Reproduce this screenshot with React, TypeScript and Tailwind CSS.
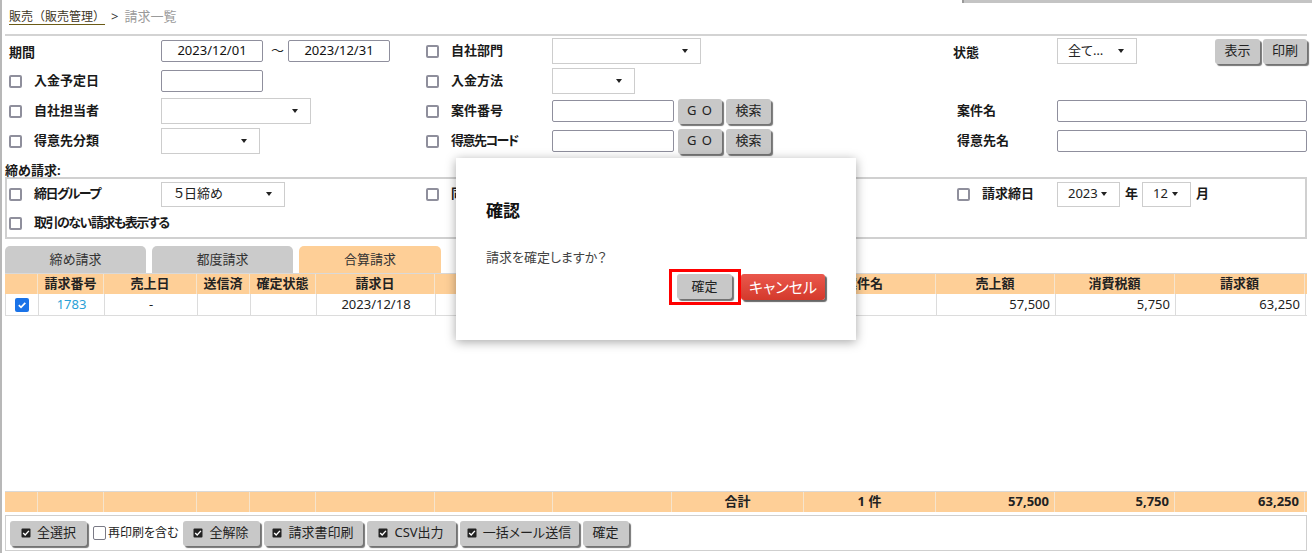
import React from "react"

// 請求一覧（合算請求）＋ 確認ダイアログ

function Check() {
  return <span className="inline-block w-[13px] h-[13px] shrink-0 rounded-[2px] border-2 border-[#8f8f9c] bg-white" />
}

function Arrow() {
  return (
    <span className="inline-block w-0 h-0 border-x-[3.5px] border-x-transparent border-t-[4px] border-t-[#222]" />
  )
}

function Select({ value = "", className = "" }: { value?: string; className?: string }) {
  return (
    <div
      className={`flex items-center justify-between bg-white border border-[#cdcdcd] pl-[10px] pr-[12px] text-[13px] text-[#222] ${className}`}
    >
      <span>{value}</span>
      <Arrow />
    </div>
  )
}

function Input({ value = "", className = "" }: { value?: string; className?: string }) {
  return (
    <div
      className={`flex items-center justify-center bg-white border border-[#8f8f9d] rounded-[2px] text-[13px] text-[#111] ${className}`}
    >
      {value}
    </div>
  )
}

function GrayBtn({ children, className = "" }: { children: React.ReactNode; className?: string }) {
  return (
    <div
      className={`flex items-center justify-center gap-[6px] bg-[#c8c8c8] rounded-[3px] shadow-[2px_2px_1px_rgba(0,0,0,0.55)] text-[13px] text-[#222] shrink-0 ${className}`}
    >
      {children}
    </div>
  )
}

function BoxIcon() {
  return (
    <svg width="10" height="10" viewBox="0 0 10 10">
      <rect x="0.5" y="0.5" width="9" height="9" rx="1" fill="#222" />
      <path d="M2.2 5 L4.2 7 L7.9 2.9" stroke="#fff" strokeWidth="1.4" fill="none" />
    </svg>
  )
}

function Label({ children, className = "" }: { children: React.ReactNode; className?: string }) {
  return <span className={`text-[13px] font-bold text-[#1a1a1a] whitespace-nowrap ${className}`}>{children}</span>
}

function CheckLabel({
  children,
  className = "",
  tight = false,
}: {
  children: React.ReactNode
  className?: string
  tight?: boolean
}) {
  return (
    <div className={`flex items-center gap-[12px] ${className}`}>
      <Check />
      <Label className={tight ? "tracking-[-1.5px]" : ""}>{children}</Label>
    </div>
  )
}

const cols =
  "grid grid-cols-[33px_66px_93px_53px_66px_119px_118px_119px_132px_132px_119px_120px_130px]"

export default function App() {
  return (
    <div className="relative w-[1312px] h-[553px] overflow-hidden bg-white border-l-2 border-[#b8b8b8] pl-[3px] pr-[5px] text-[#222] [font-family:'Noto_Sans','Noto_Sans_CJK_JP',sans-serif] [font-feature-settings:'palt']">
      {/* パンくず */}
      <div className="flex h-[34px] items-center">
        <div className="pl-[4px] text-[13px] flex items-center gap-[6px]">
          <span className="text-[#3d3524] underline decoration-[#6b5b16] underline-offset-[3px] [font-feature-settings:normal] text-[12px]">
            販売（販売管理）
          </span>
          <span className="text-[#333]">&gt;</span>
          <span className="text-[#9a9a9a]">請求一覧</span>
        </div>
        <div className="ml-auto -mr-[5px] self-start w-[350px] h-[3px] bg-[#c4c4c4] border-l-2 border-[#9a9a9a]" />
      </div>
      <div className="h-[2px] bg-[#d3d3d3]" />

      {/* 検索条件 */}
      <div className="grid grid-cols-[156px_265px_126px_405px_100px_250px] h-[30px] items-center">
        <div className="pl-[4px]">
          <Label>期間</Label>
        </div>
        <div className="flex items-center">
          <Input value="2023/12/01" className="w-[102px] h-[22px]" />
          <span className="ml-[8px] mr-[4px] text-[13px]">～</span>
          <Input value="2023/12/31" className="w-[102px] h-[22px]" />
        </div>
        <CheckLabel>自社部門</CheckLabel>
        <div>
          <Select className="w-[149px] h-[26px]" />
        </div>
        <div className="-ml-[4px]">
          <Label>状態</Label>
        </div>
        <div className="flex items-center justify-between">
          <Select value="全て…" className="w-[80px] h-[26px]" />
          <div className="flex gap-[3px]">
            <GrayBtn className="w-[45px] h-[25px]">表示</GrayBtn>
            <GrayBtn className="w-[44px] h-[25px]">印刷</GrayBtn>
          </div>
        </div>
      </div>

      <div className="grid grid-cols-[156px_265px_126px_405px_100px_250px] h-[30px] items-center">
        <CheckLabel className="pl-[4px]">入金予定日</CheckLabel>
        <div>
          <Input className="w-[102px] h-[22px]" />
        </div>
        <CheckLabel>入金方法</CheckLabel>
        <div>
          <Select className="w-[83px] h-[26px]" />
        </div>
        <div />
        <div />
      </div>

      <div className="grid grid-cols-[156px_265px_126px_405px_100px_250px] h-[30px] items-center">
        <CheckLabel className="pl-[4px]">自社担当者</CheckLabel>
        <div>
          <Select className="w-[150px] h-[26px]" />
        </div>
        <CheckLabel>案件番号</CheckLabel>
        <div className="flex items-center gap-[4px]">
          <Input className="w-[122px] h-[22px]" />
          <GrayBtn className="w-[44px] h-[25px] tracking-[1px]">G O</GrayBtn>
          <GrayBtn className="w-[45px] h-[25px]">検索</GrayBtn>
        </div>
        <Label>案件名</Label>
        <div>
          <Input className="w-[250px] h-[22px]" />
        </div>
      </div>

      <div className="grid grid-cols-[156px_265px_126px_405px_100px_250px] h-[30px] items-center">
        <CheckLabel className="pl-[4px]">得意先分類</CheckLabel>
        <div>
          <Select className="w-[99px] h-[26px]" />
        </div>
        <CheckLabel tight>得意先コード</CheckLabel>
        <div className="flex items-center gap-[4px]">
          <Input className="w-[122px] h-[22px]" />
          <GrayBtn className="w-[44px] h-[25px] tracking-[1px]">G O</GrayBtn>
          <GrayBtn className="w-[45px] h-[25px]">検索</GrayBtn>
        </div>
        <Label>得意先名</Label>
        <div>
          <Input className="w-[250px] h-[22px]" />
        </div>
      </div>

      {/* 締め請求 */}
      <div className="h-[21px] pt-[5px] leading-[16px]">
        <Label>締め請求:</Label>
      </div>
      <div className="border-2 border-[#d0d0d0]">
        <div className="grid grid-cols-[154px_265px_126px_405px_100px_248px] h-[30px] items-center">
          <CheckLabel className="pl-[2px]" tight>
            締日グループ
          </CheckLabel>
          <div>
            <Select value="５日締め" className="w-[124px] h-[25px] pl-[12px]" />
          </div>
          <CheckLabel>同月</CheckLabel>
          <div />
          <CheckLabel>請求締日</CheckLabel>
          <div className="flex items-center">
            <Select value="2023" className="w-[63px] h-[25px]" />
            <Label className="ml-[5px] mr-[4px]">年</Label>
            <Select value="12" className="w-[49px] h-[25px]" />
            <Label className="ml-[5px]">月</Label>
          </div>
        </div>
        <div className="h-[28px] flex items-center pl-[2px]">
          <CheckLabel tight>取引のない請求も表示する</CheckLabel>
        </div>
      </div>

      {/* タブ */}
      <div className="flex gap-[6px] mt-[7px] h-[27px] text-[13px] text-[#333]">
        <div className="w-[141px] rounded-t-[5px] bg-[#cbcbcb] flex items-center justify-center">締め請求</div>
        <div className="w-[141px] rounded-t-[5px] bg-[#cbcbcb] flex items-center justify-center">都度請求</div>
        <div className="w-[142px] rounded-t-[5px] bg-[#fecf97] flex items-center justify-center">合算請求</div>
      </div>

      {/* 一覧 */}
      <div className={`${cols} border-t border-[#d9d9d9] h-[21px] bg-[#fecf97] text-[13px] font-bold text-[#222]`}>
        <div className="border-r border-[#f6e4cc]" />
        <div className="flex items-center justify-center border-r border-[#f6e4cc]">請求番号</div>
        <div className="flex items-center justify-center border-r border-[#f6e4cc]">売上日</div>
        <div className="flex items-center justify-center border-r border-[#f6e4cc]">送信済</div>
        <div className="flex items-center justify-center border-r border-[#f6e4cc]">確定状態</div>
        <div className="flex items-center justify-center border-r border-[#f6e4cc]">請求日</div>
        <div className="border-r border-[#f6e4cc]" />
        <div className="border-r border-[#f6e4cc]" />
        <div className="border-r border-[#f6e4cc]" />
        <div className="flex items-center justify-center pr-[12px] border-r border-[#f6e4cc]">案件名</div>
        <div className="flex items-center justify-center border-r border-[#f6e4cc]">売上額</div>
        <div className="flex items-center justify-center border-r border-[#f6e4cc]">消費税額</div>
        <div className="flex items-center justify-center border-r border-[#f6e4cc]">請求額</div>
      </div>
      <div className={`${cols} h-[22px] border-b border-l border-[#dcdcdc] text-[13px]`}>
        <div className="flex items-center justify-center border-r border-[#dcdcdc]">
          <span className="w-[14px] h-[14px] rounded-[2px] bg-[#1a73e8] flex items-center justify-center">
            <svg width="10" height="10" viewBox="0 0 10 10">
              <path d="M1.8 5.2 L4 7.3 L8.3 2.8" stroke="#fff" strokeWidth="1.7" fill="none" />
            </svg>
          </span>
        </div>
        <div className="flex items-center justify-center border-r border-[#dcdcdc] text-[#2a9fd6]">1783</div>
        <div className="flex items-center justify-center border-r border-[#dcdcdc]">-</div>
        <div className="border-r border-[#dcdcdc]" />
        <div className="border-r border-[#dcdcdc]" />
        <div className="flex items-center justify-center border-r border-[#dcdcdc]">2023/12/18</div>
        <div className="border-r border-[#dcdcdc]" />
        <div className="border-r border-[#dcdcdc]" />
        <div className="border-r border-[#dcdcdc]" />
        <div className="border-r border-[#dcdcdc]" />
        <div className="flex items-center justify-end pr-[5px] border-r border-[#dcdcdc]">57,500</div>
        <div className="flex items-center justify-end pr-[5px] border-r border-[#dcdcdc]">5,750</div>
        <div className="flex items-center justify-end pr-[5px] border-r border-[#dcdcdc]">63,250</div>
      </div>
      <div className="h-[175px]" />

      {/* 合計 */}
      <div className={`${cols} border-t border-[#d9d9d9] h-[21px] bg-[#fecf97] text-[13px] font-bold`}>
        {Array.from({ length: 8 }).map((_, i) => (
          <div key={i} className="border-r border-[#f6e4cc]" />
        ))}
        <div className="flex items-center justify-center border-r border-[#f6e4cc]">合計</div>
        <div className="flex items-center justify-center border-r border-[#f6e4cc]">1 件</div>
        <div className="flex items-center justify-end pr-[5px] border-r border-[#f6e4cc]">57,500</div>
        <div className="flex items-center justify-end pr-[5px] border-r border-[#f6e4cc]">5,750</div>
        <div className="flex items-center justify-end pr-[5px] border-r border-[#f6e4cc]">63,250</div>
      </div>

      {/* ボタンバー */}
      <div className="mt-[3px] h-[36px] border border-[#cfcfcf] flex items-center gap-[4px] pl-[4px]">
        <GrayBtn className="w-[77px] h-[25px]">
          <BoxIcon />
          全選択
        </GrayBtn>
        <div className="flex items-center gap-[2px] ml-[2px]">
          <span className="inline-block w-[13px] h-[14px] rounded-[2px] border-[1.5px] border-[#7a7a86] bg-white" />
          <span className="text-[12px] text-[#222]">再印刷を含む</span>
        </div>
        <GrayBtn className="w-[77px] h-[25px]">
          <BoxIcon />
          全解除
        </GrayBtn>
        <GrayBtn className="w-[99px] h-[25px]">
          <BoxIcon />
          請求書印刷
        </GrayBtn>
        <GrayBtn className="w-[89px] h-[25px]">
          <BoxIcon />
          CSV出力
        </GrayBtn>
        <GrayBtn className="w-[119px] h-[25px]">
          <BoxIcon />
          一括メール送信
        </GrayBtn>
        <GrayBtn className="w-[46px] h-[25px]">確定</GrayBtn>
      </div>

      {/* 確認ダイアログ */}
      <div className="absolute left-[454px] top-[158px] w-[400px] h-[182px] bg-white shadow-[0_2px_10px_rgba(0,0,0,0.35)] pl-[30px] pr-[31px] pt-[43px]">
        <div className="text-[17px] font-bold leading-[20px] text-[#111]">確認</div>
        <div className="mt-[27px] text-[13px] leading-[18px] text-[#444]">請求を確定しますか？</div>
        <div className="mt-[3px] flex justify-end items-start">
          <div className="border-[3px] border-[#ff0000] pl-[5px] pr-[6px] pt-[2px] pb-[3px]">
            <GrayBtn className="w-[55px] h-[25px]">確定</GrayBtn>
          </div>
          <div className="mt-[5px] w-[84px] h-[26px] rounded-[3px] bg-gradient-to-b from-[#ea574c] to-[#d4392b] shadow-[2px_2px_1px_rgba(0,0,0,0.6)] flex items-center justify-center text-[15px] text-white">
            キャンセル
          </div>
        </div>
      </div>
    </div>
  )
}
